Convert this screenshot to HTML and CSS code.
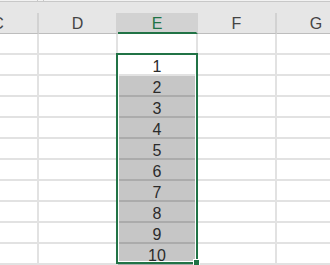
FILE: index.html
```html
<!DOCTYPE html>
<html>
<head>
<meta charset="utf-8">
<link rel="stylesheet" href="styles.css">
</head>
<body>
<div class="sheet">
  <div class="topbar"><div class="fbar"><span></span><span></span></div></div>
  <div class="grid">
    <div class="hd">C</div><div class="hd">D</div><div class="hd sel">E</div><div class="hd">F</div><div class="hd">G</div>
    <div class="c"></div><div class="c"></div><div class="c"></div><div class="c"></div><div class="c"></div>
    <div class="c"></div><div class="c"></div><div class="c">1</div><div class="c"></div><div class="c"></div>
    <div class="c"></div><div class="c"></div><div class="c g">2</div><div class="c"></div><div class="c"></div>
    <div class="c"></div><div class="c"></div><div class="c g">3</div><div class="c"></div><div class="c"></div>
    <div class="c"></div><div class="c"></div><div class="c g">4</div><div class="c"></div><div class="c"></div>
    <div class="c"></div><div class="c"></div><div class="c g">5</div><div class="c"></div><div class="c"></div>
    <div class="c"></div><div class="c"></div><div class="c g">6</div><div class="c"></div><div class="c"></div>
    <div class="c"></div><div class="c"></div><div class="c g">7</div><div class="c"></div><div class="c"></div>
    <div class="c"></div><div class="c"></div><div class="c g">8</div><div class="c"></div><div class="c"></div>
    <div class="c"></div><div class="c"></div><div class="c g">9</div><div class="c"></div><div class="c"></div>
    <div class="c"></div><div class="c"></div><div class="c g">10</div><div class="c"></div><div class="c"></div>
  </div>
  <div class="selection"><div class="handle"></div></div>
</div>
</body>
</html>
```
FILE: styles.css
```css
html, body {
  margin: 0;
  padding: 0;
  background: #fff;
}
body {
  width: 330px;
  height: 265px;
  overflow: hidden;
  font-family: "Liberation Sans", Arial, sans-serif;
}
.sheet {
  position: relative;
  height: 265px;
  overflow: hidden;
}
.topbar {
  height: 13px;
  background: #e6e6e6;
}
.fbar {
  height: 1px;
  background: #f2f2f2;
  border-bottom: 1px solid #c8c8c8;
  display: flex;
  gap: 5px;
  padding-left: 37px;
}
.fbar span {
  width: 1px;
  height: 1px;
  background: #c8c8c8;
}
.grid {
  display: grid;
  grid-template-columns: 80px 79px 80px 79px 80px;
  margin-left: -41px;
}
.hd {
  box-sizing: border-box;
  height: 21px;
  background: #e6e6e6;
  border-bottom: 1px solid #bdbdbd;
  border-right: 2px solid #d2d2d2;
  text-align: center;
  font-size: 16px;
  line-height: 21px;
  color: #444;
}
.hd.sel {
  background: #d2d2d2;
  border-bottom: 2px solid #217346;
  color: #217346;
}
.c {
  box-sizing: border-box;
  height: 21px;
  border-right: 2px solid #e2e2e2;
  border-bottom: 2px solid #e2e2e2;
  text-align: center;
  font-size: 16px;
  line-height: 19px;
  padding-top: 2px;
  color: #2b2b2b;
}
.c.g {
  background: #c6c6c6;
  border-bottom-color: #ababab;
}
.selection {
  position: absolute;
  left: 116px;
  top: 53px;
  width: 82px;
  height: 211px;
  box-sizing: border-box;
  border: 2px solid #217346;
  box-shadow: inset 0 0 0 1px #fff;
}
.handle {
  position: absolute;
  right: -4px;
  bottom: -4px;
  width: 5px;
  height: 5px;
  border: 1px solid #fff;
  background: #217346;
}
```
